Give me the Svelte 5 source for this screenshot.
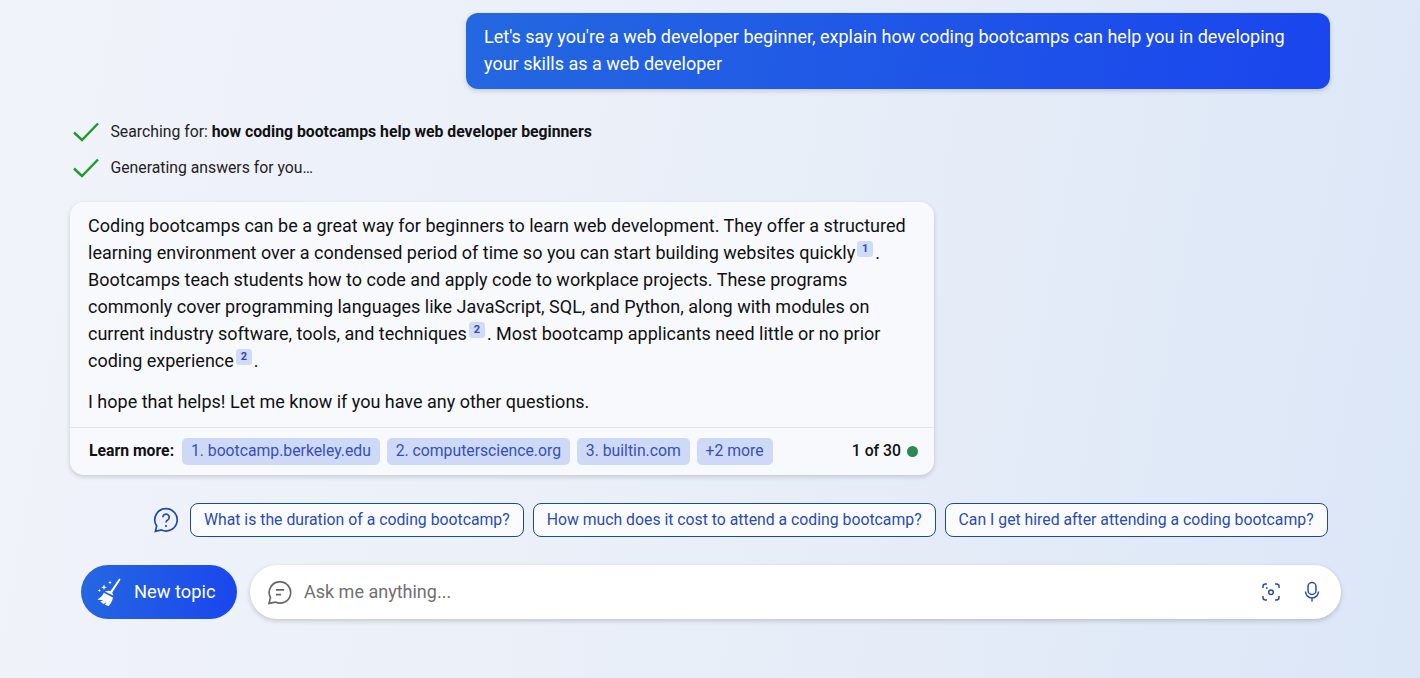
<script>
  const links = ['1. bootcamp.berkeley.edu', '2. computerscience.org', '3. builtin.com', '+2 more'];
  const suggestions = [
    'What is the duration of a coding bootcamp?',
    'How much does it cost to attend a coding bootcamp?',
    'Can I get hired after attending a coding bootcamp?'
  ];
</script>

<main class="page">
  <div class="user-row">
    <div class="user-bubble">Let's say you're a web developer beginner, explain how coding bootcamps can help you in developing your skills as a web developer</div>
  </div>

  <div class="status">
    <svg class="check" viewBox="0 0 26 20"><path d="M1 10.500 L9 18 L25 1.500" /></svg>
    <span>Searching for: <b>how coding bootcamps help web developer beginners</b></span>
  </div>
  <div class="status second">
    <svg class="check" viewBox="0 0 26 20"><path d="M1 10.500 L9 18 L25 1.500" /></svg>
    <span>Generating answers for you…</span>
  </div>

  <article class="card">
    <div class="body">
      <p>Coding bootcamps can be a great way for beginners to learn web development. They offer a structured learning environment over a condensed period of time so you can start building websites quickly<sup>1</sup>. Bootcamps teach students how to code and apply code to workplace projects. These programs commonly cover programming languages like JavaScript, SQL, and Python, along with modules on current industry software, tools, and techniques<sup>2</sup>. Most bootcamp applicants need little or no prior coding experience<sup>2</sup>.</p>
      <p class="last">I hope that helps! Let me know if you have any other questions.</p>
    </div>
    <footer class="foot">
      <b class="learn">Learn more:</b>
      {#each links as l}<span class="chip">{l}</span>{/each}
      <span class="count">1 of 30<i class="dot"></i></span>
    </footer>
  </article>

  <div class="suggest">
    <svg class="q" viewBox="0 0 26 26" fill="none">
      <path d="M13 1.600a11.200 11.200 0 1 1-4.600 21.400L2.400 24.400l1.300-5.400A11.200 11.200 0 0 1 13 1.600Z" />
      <path d="M9.800 10.200a3.200 3.200 0 1 1 5 2.700c-1.200.8-1.800 1.400-1.800 2.700" />
      <circle cx="13" cy="19" r="1.100" class="qd" />
    </svg>
    {#each suggestions as s}<button class="pill">{s}</button>{/each}
  </div>

  <div class="bar">
    <button class="new">
      <svg class="broom" viewBox="0 0 26 28">
        <path class="w" d="M24.200 0.600 25.600 1.600 17 15l-2-1.300Z" />
        <path class="w" d="M12.500 13c2-.7 4.500.7 5.400 3l.3 1.500L9.800 13.600ZM8.800 14.800l9.200 4.600c-.6 3.400-2.300 6.500-4.300 8.600-1.300-.3-2.600-.9-3.700-1.600.6-.7 1.200-1.600 1.500-2.500-1 .9-2 1.600-3.100 2-1.100-.8-2.100-1.700-3-2.700 1.100-.2 2.300-.8 3-1.500-1.900.4-4.200.4-6.200-.2 3-1.200 5.300-3.500 6.600-6.700Z" />
        <path class="w" d="M9 6.500l.8 2 2 .8-2 .8-.8 2-.8-2-2-.8 2-.8ZM15 2.800l.5 1.300 1.300.5-1.300.5-.5 1.300-.5-1.300-1.300-.5 1.300-.5ZM4.300 10.800l.5 1.200 1.200.5-1.200.5-.5 1.200-.5-1.200-1.200-.5 1.200-.5Z" />
      </svg>
      <span class="new-label">New topic</span>
    </button>
    <div class="input">
      <svg class="chat" viewBox="0 0 24 24" fill="none">
        <path d="M12.500 1.800a10.200 10.200 0 1 1-4.400 19.400L2 22.400l1.300-5.600A10.200 10.200 0 0 1 12.500 1.800Z" />
        <path d="M8.500 9.500h8M8.500 14h5" />
      </svg>
      <span class="ph">Ask me anything...</span>
      <svg class="cam" viewBox="0 0 20 20" fill="none">
        <path d="M6 2H4.500A2.500 2.500 0 0 0 2 4.500V6M14 2h1.500A2.500 2.500 0 0 1 18 4.500V6M2 14v1.500A2.500 2.500 0 0 0 4.500 18H6M18 14v1.500a2.500 2.500 0 0 1-2.500 2.500H14" />
        <circle cx="10" cy="10.300" r="2.300" />
        <circle cx="5.800" cy="6" r=".9" class="cd" />
      </svg>
      <svg class="mic" viewBox="0 0 20 22" fill="none">
        <rect x="6" y="1.500" width="8" height="12" rx="4" />
        <path d="M3.500 10.500a6.500 6.500 0 0 0 13 0M10 17v3.500" />
      </svg>
    </div>
  </div>
</main>

<style>
  :global(body) {
    margin: 0;
    background: linear-gradient(100deg, #f1f3fa 0%, #e8eef8 55%, #dbe6f7 100%);
    font-family: Roboto, "Liberation Sans", sans-serif;
    color: #111;
  }
  .page {
    box-sizing: border-box;
    width: 1420px;
    height: 678px;
    padding-top: 13px;
    overflow: hidden;
  }
  .user-row {
    display: flex;
    justify-content: flex-end;
    padding-right: 90px;
  }
  .user-bubble {
    box-sizing: border-box;
    width: 864px;
    height: 76px;
    padding: 10px 18px;
    border-radius: 12px;
    background: linear-gradient(100deg, #2468e0 0%, #1a45ee 100%);
    box-shadow: 0 2px 5px rgba(0, 0, 0, .16);
    color: #fff;
    font-size: 18px;
    line-height: 27px;
  }
  .status {
    display: flex;
    align-items: center;
    height: 20px;
    margin: 32px 0 0 73px;
    gap: 11.500px;
    font-size: 15.770px;
    color: #222;
  }
  .status.second { margin-top: 16px; }
  .status b { font-weight: 700; color: #111; }
  .check { width: 26px; height: 20px; flex: none; margin-top: 2px; }
  .check path { fill: none; stroke: #1f9a2e; stroke-width: 2.400; }
  .card {
    width: 864px;
    height: 273px;
    margin: 25px 0 0 70px;
    box-sizing: border-box;
    display: flex;
    flex-direction: column;
    border-radius: 14px;
    background: #f8f9fd;
    box-shadow: 0 2px 5px rgba(0, 0, 0, .16);
  }
  .body {
    flex: 1;
    padding: 10px 18px 0;
    font-size: 18px;
    line-height: 27px;
    color: #111;
  }
  p { margin: 0; }
  .last { margin-top: 14px; }
  sup {
    display: inline-block;
    width: 16px;
    height: 16px;
    margin: 0 2px 0 2px;
    border-radius: 3px;
    background: #d0dcf6;
    color: #2f49b5;
    font-size: 11px;
    font-weight: 700;
    line-height: 15px;
    text-align: center;
    vertical-align: 7px;
  }
  .foot {
    box-sizing: border-box;
    height: 48px;
    display: flex;
    align-items: center;
    gap: 6.800px;
    padding: 0 16px 0 19px;
    border-top: 1px solid #e2e4ea;
    font-size: 15.750px;
  }
  .learn { font-weight: 700; margin-right: 1px; padding-bottom: 2px; }
  .chip {
    height: 27px;
    padding: 0 9px;
    border-radius: 5px;
    background: #cdd9f6;
    color: #3750b5;
    line-height: 25px;
  }
  .count {
    margin-left: auto;
    display: flex;
    align-items: center;
    gap: 6px;
    font-weight: 500;
    padding-bottom: 2px;
  }
  .dot {
    width: 11px;
    height: 11px;
    border-radius: 50%;
    background: #2a8a50;
    margin-top: 2px;
  }
  .suggest {
    display: flex;
    align-items: center;
    gap: 9px;
    margin: 28px 0 0 153px;
    height: 34px;
  }
  .q { width: 26px; height: 26px; margin-right: 2px; flex: none; }
  .q path { stroke: #1f4aa8; stroke-width: 1.700; }
  .qd { fill: #1f4aa8; }
  .pill {
    box-sizing: border-box;
    height: 34px;
    padding: 0 13px 2px;
    border: 1px solid #1f4a8e;
    border-radius: 8px;
    background: #fafbfe;
    color: #2a4bb0;
    font: 15.790px Roboto, sans-serif;
    white-space: nowrap;
  }
  .bar {
    display: flex;
    gap: 13px;
    margin: 28px 0 0 81px;
    height: 54px;
  }
  .new {
    width: 156px;
    height: 54px;
    border: 0;
    border-radius: 27px;
    padding: 0 0 0 14px;
    display: flex;
    align-items: center;
    gap: 13px;
    background: linear-gradient(100deg, #2468e0 0%, #1a45ee 100%);
    color: #fff;
    font: 400 18.300px Roboto, sans-serif;
    box-sizing: border-box;
  }
  .new-label { padding-bottom: 2px; }
  .broom { width: 26px; height: 28px; flex: none; }
  .w { fill: #fff; }
  .input {
    box-sizing: border-box;
    width: 1091px;
    height: 54px;
    display: flex;
    align-items: center;
    padding: 0 19px 0 17px;
    border-radius: 27px;
    background: #fff;
    box-shadow: 0 2px 5px rgba(0, 0, 0, .18);
  }
  .chat { width: 25px; height: 25px; flex: none; margin-right: 12px; }
  .chat path { stroke: #666; stroke-width: 1.600; }
  .ph { flex: 1; font-size: 18px; color: #707070; padding-bottom: 2px; }
  .cam { width: 20px; height: 20px; margin-right: 21px; }
  .cam path, .cam circle { stroke: #2a4ea0; stroke-width: 1.500; }
  .cam .cd { fill: #2a4ea0; stroke: none; }
  .mic { width: 20px; height: 22px; }
  .mic rect, .mic path { stroke: #2a4ea0; stroke-width: 1.500; }
</style>
